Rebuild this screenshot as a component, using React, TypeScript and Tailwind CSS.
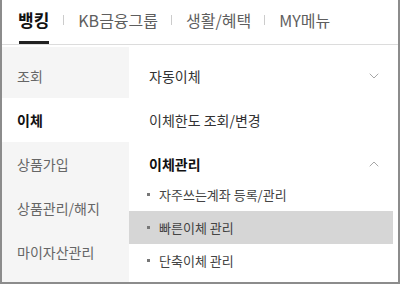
import { ChevronDown, ChevronUp } from 'lucide-react'

const leftMenu = ['조회', '이체', '상품가입', '상품관리/해지', '마이자산관리']

const subItems = [
  { label: '자주쓰는계좌 등록/관리', active: false },
  { label: '빠른이체 관리', active: true },
  { label: '단축이체 관리', active: false },
]

const App = () => {
  return (
    <div
      className="w-[400px] h-[284px] bg-white border-x-2 border-b-2 border-[#8c8c8c] overflow-hidden flex flex-col"
      style={{ fontFamily: '"Noto Sans CJK KR", "Noto Sans", sans-serif' }}
    >
      {/* Top tabs */}
      <div className="h-[45px] shrink-0 border-b border-[#dcdcdc] flex items-start pl-[15px] pt-[7px]">
        <div className="flex flex-col items-center">
          <span className="text-[17px] leading-[26px] font-bold text-[#111] px-[1px]">뱅킹</span>
          <span className="mt-[8px] w-[30px] h-[3px] bg-[#222]"></span>
        </div>
        <span className="ml-[13px] mt-[8px] w-px h-[10px] bg-[#ccc]"></span>
        <span className="ml-[14px] text-[16px] leading-[26px] text-[#5e5e5e]">KB금융그룹</span>
        <span className="ml-[13px] mt-[8px] w-px h-[10px] bg-[#ccc]"></span>
        <span className="ml-[14px] text-[16px] leading-[26px] text-[#5e5e5e]">생활/혜택</span>
        <span className="ml-[13px] mt-[8px] w-px h-[10px] bg-[#ccc]"></span>
        <span className="ml-[14px] text-[16px] leading-[26px] text-[#5e5e5e]">MY메뉴</span>
      </div>

      <div className="flex flex-1 pt-[2px]">
        {/* Left menu */}
        <div className="w-[127px] bg-[#f5f5f5] flex flex-col pt-[7px]">
          {leftMenu.map((m) => (
            <div
              key={m}
              className={
                m === '이체'
                  ? 'h-[44px] flex items-center pl-[15px] bg-white text-[14px] font-bold text-[#111]'
                  : 'h-[44px] flex items-center pl-[15px] text-[14px] text-[#666]'
              }
            >
              {m}
            </div>
          ))}
        </div>

        {/* Right menu */}
        <div className="flex-1 flex flex-col pt-[7px] pr-[5px]">
          <div className="h-[44px] flex items-center justify-between pl-[20px] pr-[11px] text-[14px] text-[#333]">
            <span>자동이체</span>
            <ChevronDown className="w-[16px] h-[16px] text-[#999]" strokeWidth={1.3} />
          </div>
          <div className="h-[44px] flex items-center pl-[20px] text-[14px] text-[#333]">
            <span>이체한도 조회/변경</span>
          </div>
          <div className="h-[44px] flex items-center justify-between pl-[20px] pr-[11px] text-[14px] font-bold text-[#111]">
            <span>이체관리</span>
            <ChevronUp className="w-[16px] h-[16px] text-[#999]" strokeWidth={1.3} />
          </div>
          <div className="flex flex-col -mt-[8px]">
            {subItems.map((s) => (
              <div
                key={s.label}
                className={
                  s.active
                    ? 'h-[33px] flex items-center pl-[18px] bg-[#d6d6d6] text-[13px] text-[#444]'
                    : 'h-[33px] flex items-center pl-[18px] text-[13px] text-[#444]'
                }
              >
                <span className="w-[3px] h-[3px] bg-[#777] mr-[9px]"></span>
                <span>{s.label}</span>
              </div>
            ))}
          </div>
        </div>
      </div>
    </div>
  )
}

export default App
